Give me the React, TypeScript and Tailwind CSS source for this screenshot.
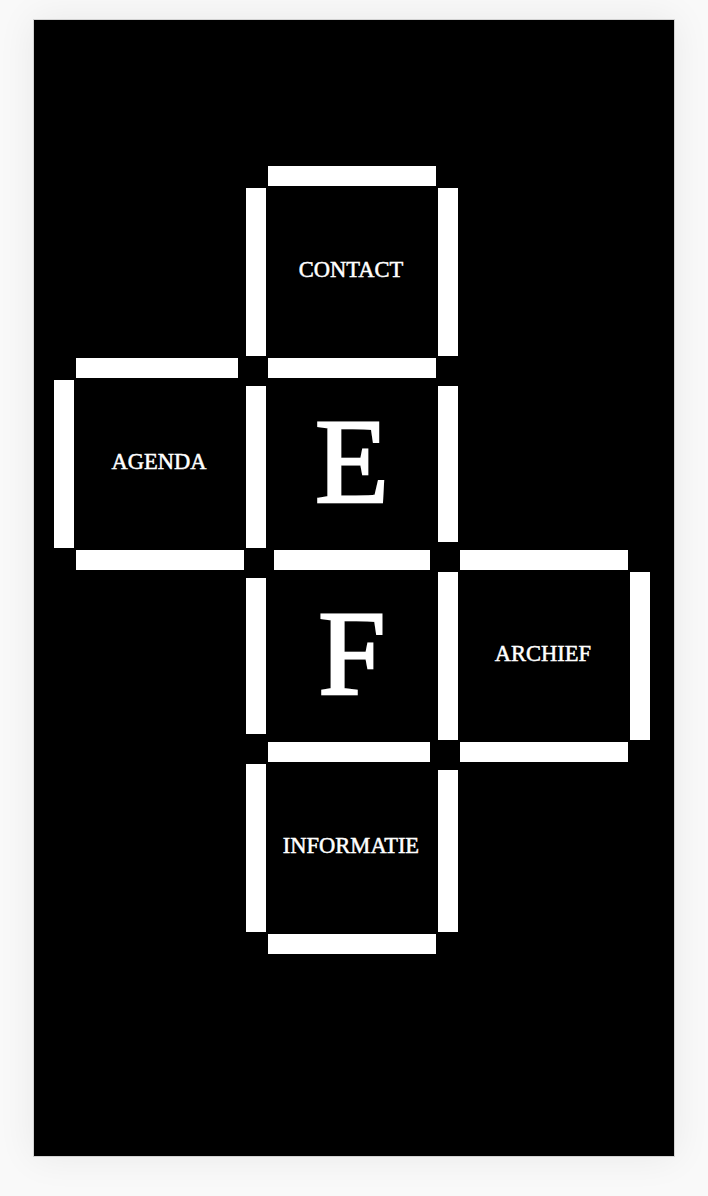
import React from "react";

function Label({ text }: { text: string }) {
  return (
    <div className="flex items-center justify-center pr-[2px] pb-[3px]">
      <span className="text-[22.5px] leading-none text-white [-webkit-text-stroke:0.5px_white] font-['Liberation_Serif','Times_New_Roman',serif]">
        {text}
      </span>
    </div>
  );
}

function Big({ text }: { text: string }) {
  return (
    <div className="flex items-center justify-center pb-[6px]">
      <span className="text-[121px] leading-none text-white [-webkit-text-stroke:2.5px_white] font-['Liberation_Serif','Times_New_Roman',serif]">
        {text}
      </span>
    </div>
  );
}

export default function App() {
  return (
    <div className="min-h-[1196px] bg-[#f9f9f9] pt-[19px]">
      <div className="mx-auto h-[1138px] w-[642px] border border-[#d2d2d2] bg-black pl-[20px] pt-[146px] shadow-[0_0_36px_rgba(0,0,0,0.07)]">
        <div className="grid w-[596px] grid-cols-[20px_172px_20px_172px_20px_172px_20px] grid-rows-[20px_172px_20px_172px_20px_172px_20px_172px_20px]">
          {/* horizontal bars */}
          <div className="col-start-4 row-start-1 ml-[2px] mr-[2px] bg-white" />
          <div className="col-start-2 row-start-3 ml-[2px] mr-[8px] bg-white" />
          <div className="col-start-4 row-start-3 ml-[2px] mr-[2px] bg-white" />
          <div className="col-start-2 row-start-5 ml-[2px] mr-[2px] bg-white" />
          <div className="col-start-4 row-start-5 ml-[8px] mr-[8px] bg-white" />
          <div className="col-start-6 row-start-5 ml-[2px] mr-[2px] bg-white" />
          <div className="col-start-4 row-start-7 ml-[2px] mr-[8px] bg-white" />
          <div className="col-start-6 row-start-7 ml-[2px] mr-[2px] bg-white" />
          <div className="col-start-4 row-start-9 ml-[2px] mr-[2px] bg-white" />

          {/* vertical bars */}
          <div className="col-start-3 row-start-2 mt-[2px] mb-[2px] bg-white" />
          <div className="col-start-5 row-start-2 mt-[2px] mb-[2px] bg-white" />
          <div className="col-start-1 row-start-4 mt-[2px] mb-[2px] bg-white" />
          <div className="col-start-3 row-start-4 mt-[8px] mb-[2px] bg-white" />
          <div className="col-start-5 row-start-4 mt-[8px] mb-[8px] bg-white" />
          <div className="col-start-3 row-start-6 mt-[8px] mb-[8px] bg-white" />
          <div className="col-start-5 row-start-6 mt-[2px] mb-[2px] bg-white" />
          <div className="col-start-7 row-start-6 mt-[2px] mb-[2px] bg-white" />
          <div className="col-start-3 row-start-8 mt-[2px] mb-[2px] bg-white" />
          <div className="col-start-5 row-start-8 mt-[8px] mb-[2px] bg-white" />

          {/* labels */}
          <div className="col-start-4 row-start-2 grid">
            <Label text="CONTACT" />
          </div>
          <div className="col-start-2 row-start-4 grid">
            <Label text="AGENDA" />
          </div>
          <div className="col-start-4 row-start-4 grid">
            <Big text="E" />
          </div>
          <div className="col-start-4 row-start-6 grid">
            <Big text="F" />
          </div>
          <div className="col-start-6 row-start-6 grid">
            <Label text="ARCHIEF" />
          </div>
          <div className="col-start-4 row-start-8 grid">
            <Label text="INFORMATIE" />
          </div>
        </div>
      </div>
    </div>
  );
}
